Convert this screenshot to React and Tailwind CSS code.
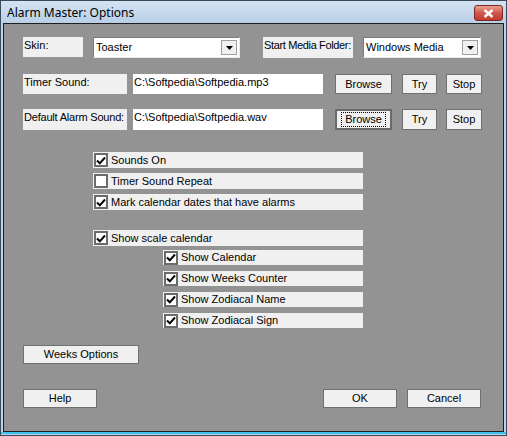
import React from 'react';

const font = { fontFamily: '"Liberation Sans", Arial, sans-serif' };

const Label = ({ className, children }) => (
  <div className={`bg-[#f0f0f0] text-[11px] leading-[13px] whitespace-nowrap pl-[1px] pt-[2px] text-black ${className}`}>{children}</div>
);

const Button = ({ className, children, focused }) => (
  <div
    className={`bg-[#f0f0f0] flex items-center justify-center text-[11px] whitespace-nowrap text-black ${
      focused ? 'border-2 border-[#6a6a6a]' : 'border border-[#707070]'
    } ${className}`}
  >
    {focused ? (
      <span className="border border-dotted border-black px-[3px] leading-[13px]">{children}</span>
    ) : (
      children
    )}
  </div>
);

const Combo = ({ className, value }) => (
  <div className={`bg-white border border-[#7a7a7a] border-b-[#e8e8e8] border-r-[#e8e8e8] flex items-center ${className}`}>
    <span className="flex-1 pl-[2px] text-[11px] whitespace-nowrap text-black">{value}</span>
    <div className="w-[16px] h-[15px] mr-[2px] bg-[#f0f0f0] border border-[#a0a0a0] flex items-center justify-center">
      <svg width="7" height="4" viewBox="0 0 7 4">
        <path d="M0 0h7L3.5 4z" fill="#000" />
      </svg>
    </div>
  </div>
);

const Field = ({ className, value }) => (
  <div className={`bg-white text-[11px] leading-[13px] whitespace-nowrap pl-[1px] pt-[2px] text-black ${className}`}>{value}</div>
);

const Check = ({ checked, label, className }) => (
  <div className={`bg-[#f0f0f0] flex items-center ${className}`}>
    <div className="w-[14px] h-[14px] border-2 border-[#6b6b6b] bg-white flex items-center justify-center ml-[1px]">
      {checked && (
        <svg width="10" height="9" viewBox="0 0 10 9">
          <path d="M1 4.5 L3.8 7.3 L9 1.5" stroke="#000" strokeWidth="2" fill="none" />
        </svg>
      )}
    </div>
    <span className="ml-[3px] text-[11px] whitespace-nowrap text-black">{label}</span>
  </div>
);

export default function App() {
  return (
    <div style={font} className="w-[507px] h-[436px] relative bg-[#bcd3ea] border border-[#3a4a5a] flex flex-col overflow-hidden">
      {/* title bar */}
      <div className="h-[22px] flex items-center bg-gradient-to-b from-[#d4e3f3] to-[#b8cfe7] pl-[6px] pr-[3px]">
        <span className="flex-1 text-[12px] text-black pt-[2px]" style={{ fontFamily: '"Noto Sans", "Liberation Sans", sans-serif' }}>
          Alarm Master: Options
        </span>
        <div className="w-[29px] h-[16px] rounded-[3px] border border-[#7a2a20] bg-gradient-to-b from-[#e8a090] via-[#d0574a] to-[#c03a2c] flex items-center justify-center mt-[2px]">
          <svg width="11" height="9" viewBox="0 0 11 9">
            <path d="M1.5 1 L9.5 8 M9.5 1 L1.5 8" stroke="#fff" strokeWidth="2.4" />
          </svg>
        </div>
      </div>

      {/* client area */}
      <div className="flex-1 mx-[2px] mb-[3px] bg-[#939393] border border-[#1e1e1e] flex flex-col pl-[19px]">
        <div className="flex items-start mt-[13px]">
          <Label className="w-[60px] h-[20px]">Skin:</Label>
          <Combo className="w-[147px] h-[21px] ml-[10px]" value="Toaster" />
          <Label className="w-[90px] h-[21px] ml-[23px] pt-[1px] tracking-[-0.35px]">Start Media Folder:</Label>
          <Combo className="w-[118px] h-[21px] ml-[10px]" value="Windows Media" />
        </div>

        <div className="flex items-start mt-[16px]">
          <Label className="w-[104px] h-[20px]">Timer Sound:</Label>
          <Field className="w-[190px] h-[20px] ml-[6px]" value="C:\Softpedia\Softpedia.mp3" />
          <Button className="w-[57px] h-[20px] ml-[12px]">Browse</Button>
          <Button className="w-[35px] h-[20px] ml-[10px]">Try</Button>
          <Button className="w-[36px] h-[20px] ml-[9px]">Stop</Button>
        </div>

        <div className="flex items-start mt-[15px]">
          <Label className="w-[104px] h-[21px] tracking-[-0.2px]">Default Alarm Sound:</Label>
          <Field className="w-[190px] h-[21px] ml-[6px]" value="C:\Softpedia\Softpedia.wav" />
          <Button focused className="w-[57px] h-[21px] ml-[12px]">Browse</Button>
          <Button className="w-[35px] h-[21px] ml-[10px]">Try</Button>
          <Button className="w-[36px] h-[21px] ml-[9px]">Stop</Button>
        </div>

        <div className="flex flex-col ml-[70px] mt-[22px] gap-[5px]">
          <Check checked className="w-[270px] h-[16px]" label="Sounds On" />
          <Check className="w-[270px] h-[16px]" label="Timer Sound Repeat" />
          <Check checked className="w-[270px] h-[16px]" label="Mark calendar dates that have alarms" />
          <Check checked className="w-[270px] h-[16px] mt-[15px]" label="Show scale calendar" />
        </div>

        <div className="flex flex-col ml-[140px] mt-[4px] gap-[6px]">
          <Check checked className="w-[200px] h-[15px]" label="Show Calendar" />
          <Check checked className="w-[200px] h-[15px]" label="Show Weeks Counter" />
          <Check checked className="w-[200px] h-[15px]" label="Show Zodiacal Name" />
          <Check checked className="w-[200px] h-[15px]" label="Show Zodiacal Sign" />
        </div>

        <Button className="w-[116px] h-[19px] mt-[17px]">Weeks Options</Button>

        <div className="flex items-start mt-[25px]">
          <Button className="w-[74px] h-[19px]">Help</Button>
          <Button className="w-[74px] h-[19px] ml-[226px]">OK</Button>
          <Button className="w-[74px] h-[19px] ml-[10px]">Cancel</Button>
        </div>
      </div>
      <div className="absolute left-0 right-0 bottom-[1px] h-[2px] bg-[#3cc4ee]" />
    </div>
  );
}
